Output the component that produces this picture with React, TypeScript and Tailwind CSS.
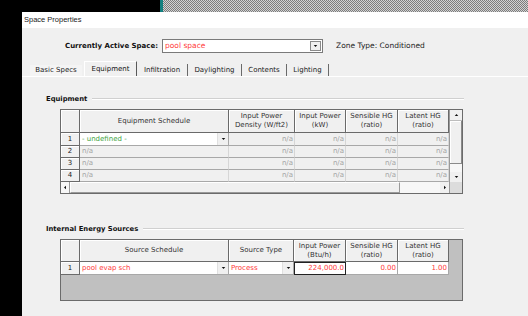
import React from "react";

const Tri = ({ dir }: { dir: "up" | "down" | "left" | "right" }) => {
  const pts = {
    up: "0,4 3.5,0 7,4",
    down: "0,0 7,0 3.5,4",
    left: "4,0 4,7 0,3.5",
    right: "0,0 0,7 4,3.5",
  }[dir];
  const w = dir === "up" || dir === "down" ? 7 : 4;
  const h = dir === "up" || dir === "down" ? 4 : 7;
  return (
    <svg width={w - 2} height={h - 2} viewBox={`0 0 ${w} ${h}`} className="block">
      <polygon points={pts} fill="#111" />
    </svg>
  );
};

const DropBtn = () => (
  <div className="ml-auto w-[11px] h-full bg-[#f0f0f0] flex items-center justify-center border-l border-[#e0e0e0]">
    <Tri dir="down" />
  </div>
);

const HeadCell = ({ children, w }: { children?: React.ReactNode; w: string }) => (
  <div
    className={`${w} h-full flex items-center justify-center text-center leading-[9px] text-[#333] bg-[#f0f0f0] border-r border-b border-[#6a6a6a] shadow-[inset_1px_1px_0_#ffffff]`}
  >
    {children}
  </div>
);

const NumCell = ({ n }: { n: number }) => (
  <div className="w-[19px] h-full flex items-end justify-center pb-[1px] text-[#222] bg-[#f0f0f0] border-r border-b border-[#6a6a6a] shadow-[inset_1px_1px_0_#ffffff]">
    {n}
  </div>
);

const NaCell = ({ w }: { w: string }) => (
  <div className={`${w} h-full flex items-center justify-end pr-[1px] text-[#a3a3a3] bg-[#f0f0f0] border-r border-b border-r-[#d6d6d6] border-b-[#a8a8a8]`}>
    n/a
  </div>
);

const GroupTitle = ({ title }: { title: string }) => (
  <div className="ml-[24px] w-[418px] h-[10px] flex items-center">
    <span className="font-bold text-[#111] whitespace-nowrap text-[6.8px]">{title}</span>
    <div className="flex-1 ml-[5px] border-t border-[#d0d0d0] border-b border-b-white" />
  </div>
);

export default function App() {
  const tabs = [
    { label: "Infiltration", w: "w-[51px]" },
    { label: "Daylighting", w: "w-[54px]" },
    { label: "Contents", w: "w-[45px]" },
    { label: "Lighting", w: "w-[42px]" },
  ];

  return (
    <div className="w-[528px] h-[316px] overflow-hidden bg-black font-['DejaVu_Sans',sans-serif] text-[7px]">
      {/* desktop strip */}
      <div className="flex h-[12px]">
        <div className="w-[160px] bg-black" />
        <div className="w-[3px] bg-[#137f7f]" />
        <div className="flex-1 bg-[image:repeating-conic-gradient(#7c7c7c_0%_25%,#d2d2d2_0%_50%)] bg-[length:2px_2px]" />
      </div>

      <div className="flex h-[304px]">
        <div className="w-[22px] bg-black" />
        <div className="flex-1 flex flex-col">
          {/* title bar */}
          <div className="h-[16px] bg-white flex items-center pl-[2px] text-[7.5px] text-[#1a1a1a] font-['Liberation_Sans',sans-serif]">
            Space Properties
          </div>

          <div className="flex-1 bg-[#f0f0f0] flex flex-col">
            {/* active space */}
            <div className="mt-[11px] h-[14px] flex items-center">
              <div className="ml-[43px] w-[97px] font-bold text-[#111]">Currently Active Space:</div>
              <div className="w-[161px] h-[14px] bg-white border border-[#7a7a7a] flex items-center">
                <span className="pl-[2px] text-[#ff3a3a] text-[7.5px]">pool space</span>
                <div className="ml-auto mr-[1px] w-[11px] h-[10px] bg-[#f0f0f0] border border-[#8a8a8a] flex items-center justify-center">
                  <Tri dir="down" />
                </div>
              </div>
              <div className="ml-[13px] text-[#222] text-[7.5px]">Zone Type: Conditioned</div>
            </div>

            {/* tabs */}
            <div className="mt-[8px] h-[15px] flex items-end ml-[8px]">
              <div className="w-[52px] h-[11px] flex items-center justify-center text-[#222] bg-[#f4f4f4]">
                Basic Specs
              </div>
              <div className="ml-[2px] w-[53px] h-[15px] flex items-center justify-center text-[#111] bg-[#f0f0f0] border-t border-l border-white border-r border-r-[#5a5a5a]">
                Equipment
              </div>
              {tabs.map((t) => (
                <div
                  key={t.label}
                  className={`${t.w} h-[12px] flex items-center justify-center text-[#222] border-r border-[#6a6a6a]`}
                >
                  {t.label}
                </div>
              ))}
            </div>

            {/* panel */}
            <div className="flex-1 flex flex-col border-t border-white">
              <div className="mt-[17px]">
                <GroupTitle title="Equipment" />
              </div>

              {/* equipment table */}
              <div className="mt-[5px] ml-[38px] w-[403px] h-[85px] border border-[#6b6b6b] flex">
                <div className="w-[388px] flex flex-col">
                  <div className="h-[23px] flex">
                    <HeadCell w="w-[19px]" />
                    <HeadCell w="w-[149px]">Equipment Schedule</HeadCell>
                    <HeadCell w="w-[66px]">
                      Input Power
                      <br />
                      Density (W/ft2)
                    </HeadCell>
                    <HeadCell w="w-[51px]">
                      Input Power
                      <br />
                      (kW)
                    </HeadCell>
                    <HeadCell w="w-[52px]">
                      Sensible HG
                      <br />
                      (ratio)
                    </HeadCell>
                    <HeadCell w="w-[51px]">
                      Latent HG
                      <br />
                      (ratio)
                    </HeadCell>
                  </div>
                  <div className="h-[13px] flex">
                    <NumCell n={1} />
                    <div className="w-[149px] h-full bg-white flex items-center border-r border-b border-[#a8a8a8]">
                      <span className="pl-[2px] text-[#3fa33f]">- undefined -</span>
                      <DropBtn />
                    </div>
                    <NaCell w="w-[66px]" />
                    <NaCell w="w-[51px]" />
                    <NaCell w="w-[52px]" />
                    <NaCell w="w-[51px]" />
                  </div>
                  {[2, 3, 4].map((n) => (
                    <div key={n} className="h-[12px] flex">
                      <NumCell n={n} />
                      <div className="w-[149px] h-full bg-[#f0f0f0] flex items-center pl-[2px] text-[#a3a3a3] border-r border-b border-r-[#d6d6d6] border-b-[#a8a8a8]">
                        n/a
                      </div>
                      <NaCell w="w-[66px]" />
                      <NaCell w="w-[51px]" />
                      <NaCell w="w-[52px]" />
                      <NaCell w="w-[51px]" />
                    </div>
                  ))}
                  {/* horizontal scrollbar */}
                  <div className="flex-1 flex bg-[#f7f7f7]">
                    <div className="w-[9px] flex items-center justify-center border-r border-[#9a9a9a]">
                      <Tri dir="left" />
                    </div>
                    <div className="w-[330px] bg-[#f0f0f0] border border-[#9a9a9a] border-t-white border-l-white" />
                    <div className="flex-1" />
                    <div className="w-[9px] flex items-center justify-center bg-[#f0f0f0]">
                      <Tri dir="right" />
                    </div>
                  </div>
                </div>
                <div className="flex-1 flex flex-col border-l border-[#9a9a9a]">
                  <div className="h-[11px] bg-[#f0f0f0] flex items-center justify-center border-b border-[#bdbdbd]">
                    <Tri dir="up" />
                  </div>
                  <div className="h-[43px] bg-[#f0f0f0] border-b border-r border-[#8a8a8a] shadow-[inset_1px_1px_0_#ffffff]" />
                  <div className="h-[8px] bg-[#f7f7f7]" />
                  <div className="h-[10px] bg-[#f0f0f0] flex items-center justify-center">
                    <Tri dir="down" />
                  </div>
                  <div className="flex-1 bg-[#dcdcdc]" />
                </div>
              </div>

              <div className="mt-[30px]">
                <GroupTitle title="Internal Energy Sources" />
              </div>

              {/* internal energy sources table */}
              <div className="mt-[5px] ml-[38px] w-[403px] h-[62px] border border-[#6b6b6b] bg-[#c0c0c0] flex flex-col">
                <div className="h-[22px] flex">
                  <HeadCell w="w-[19px]" />
                  <HeadCell w="w-[149px]">Source Schedule</HeadCell>
                  <HeadCell w="w-[65px]">Source Type</HeadCell>
                  <HeadCell w="w-[52px]">
                    Input Power
                    <br />
                    (Btu/h)
                  </HeadCell>
                  <HeadCell w="w-[52px]">
                    Sensible HG
                    <br />
                    (ratio)
                  </HeadCell>
                  <HeadCell w="w-[51px]">
                    Latent HG
                    <br />
                    (ratio)
                  </HeadCell>
                </div>
                <div className="h-[13px] flex text-[#ff3a3a]">
                  <NumCell n={1} />
                  <div className="w-[149px] h-full bg-white flex items-center border-r border-b border-[#a8a8a8]">
                    <span className="pl-[2px]">pool evap sch</span>
                    <DropBtn />
                  </div>
                  <div className="w-[65px] h-full bg-white flex items-center border-r border-b border-[#a8a8a8]">
                    <span className="pl-[2px]">Process</span>
                    <DropBtn />
                  </div>
                  <div className="w-[52px] h-full bg-white flex items-center justify-end pr-[1px] border border-[#222]">
                    224,000.0
                  </div>
                  <div className="w-[52px] h-full bg-white flex items-center justify-end pr-[1px] border-r border-b border-[#a8a8a8]">
                    0.00
                  </div>
                  <div className="w-[51px] h-full bg-white flex items-center justify-end pr-[1px] border-r border-b border-[#a8a8a8]">
                    1.00
                  </div>
                </div>
              </div>
            </div>
          </div>
        </div>
      </div>
    </div>
  );
}
